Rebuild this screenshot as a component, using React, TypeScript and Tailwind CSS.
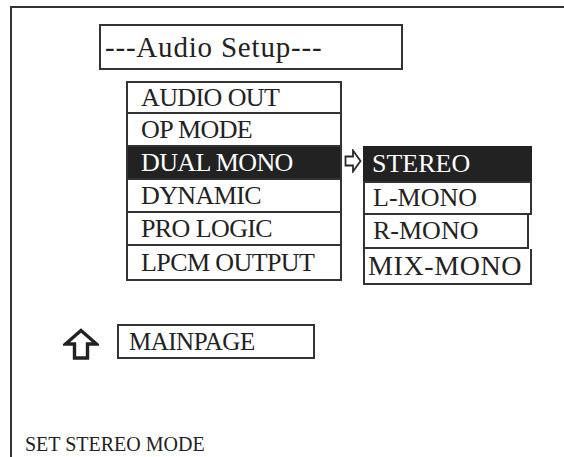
import React from "react";

const serif = { fontFamily: '"Liberation Serif", "Times New Roman", serif' };

const menu = ["AUDIO OUT", "OP MODE", "DUAL MONO", "DYNAMIC", "PRO LOGIC", "LPCM OUTPUT"];

function RightArrow() {
  return (
    <svg width="18" height="24" viewBox="0 0 18 24" className="block">
      <path d="M1.5 7.5 H9 V1.5 L16.5 12 L9 22.5 V16.5 H1.5 Z" fill="white" stroke="#2a2a2a" strokeWidth="1.8" strokeLinejoin="miter" />
    </svg>
  );
}

function UpArrow() {
  return (
    <svg width="36" height="32" viewBox="0 0 36 32" className="block">
      <path d="M18 2.5 L33.5 16 H24.5 V30 H11.5 V16 H2.5 Z" fill="white" stroke="#222" strokeWidth="3.4" strokeLinejoin="miter" />
    </svg>
  );
}

export default function App() {
  return (
    <div className="w-[564px] h-[457px] bg-white pt-[6px] pl-[10px] text-[#222]" style={serif}>
      <div className="h-full border-t-2 border-l-2 border-[#333] flex flex-col">
        <div className="ml-[87px] mt-[16px] w-[304px] h-[46px] border-2 border-[#333] flex items-center pl-[4px] text-[29px] tracking-[0.8px] leading-none">
          ---Audio Setup---
        </div>

        <div className="flex items-start ml-[114px] mt-[11px]">
          <div className="w-[216px] border-2 border-[#333] flex flex-col divide-y-2 divide-[#333]">
            {menu.map((m, i) => (
              <div
                key={m}
                className={
                  (i === 0 ? "h-[31px] " : "h-[33px] ") +
                  (m === "DUAL MONO"
                    ? "flex items-center pl-[13px] text-[26px] tracking-[-0.6px] leading-none bg-[#222] text-white"
                    : "flex items-center pl-[13px] text-[26px] tracking-[-0.6px] leading-none")
                }
              >
                {m}
              </div>
            ))}
          </div>
          <div className="mt-[68px] ml-[2px]">
            <RightArrow />
          </div>
          <div className="mt-[65px] ml-[1px] flex flex-col">
            <div className="w-[169px] h-[35px] bg-[#222] text-white flex items-center pl-[9px] text-[26px] leading-none">
              STEREO
            </div>
            <div className="w-[169px] h-[34px] border-2 border-[#333] flex items-center pl-[8px] text-[26px] leading-none">
              L-MONO
            </div>
            <div className="w-[166px] h-[34px] border-2 border-t-0 border-[#333] flex items-center pl-[8px] text-[26px] leading-none">
              R-MONO
            </div>
            <div className="w-[169px] h-[36px] border-2 border-t-0 border-[#333] flex items-center pl-[3px] text-[28px] tracking-[0.6px] leading-none">
              MIX-MONO
            </div>
          </div>
        </div>

        <div className="flex items-start ml-[51px] mt-[39px]">
          <div className="mt-[4px]">
            <UpArrow />
          </div>
          <div className="ml-[18px] w-[198px] h-[35px] border-2 border-[#333] flex items-center pl-[10px] text-[25px] tracking-[-0.5px] leading-none">
            MAINPAGE
          </div>
        </div>

        <div className="mt-auto pl-[13px] pb-[3px] text-[20px] leading-none">SET STEREO MODE</div>
      </div>
    </div>
  );
}
